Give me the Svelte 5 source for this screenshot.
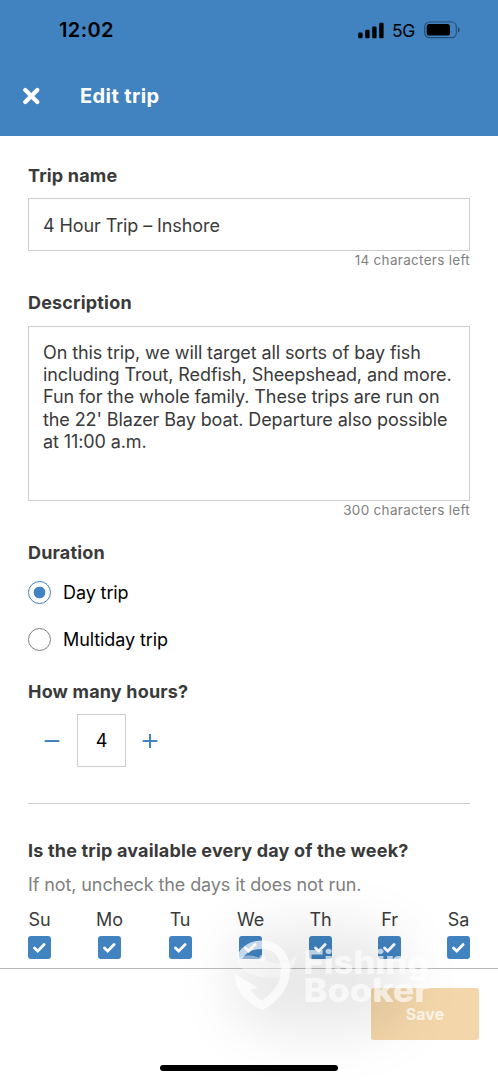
<script lang="ts">
	let tripName = $state('4 Hour Trip – Inshore');
	let description = $state(
		"On this trip, we will target all sorts of bay fish including Trout, Redfish, Sheepshead, and more. Fun for the whole family. These trips are run on the 22' Blazer Bay boat. Departure also possible at 11:00 a.m."
	);
	let duration = $state('day');
	let hours = $state(4);
	let days = $state([
		{ label: 'Su', checked: true },
		{ label: 'Mo', checked: true },
		{ label: 'Tu', checked: true },
		{ label: 'We', checked: true },
		{ label: 'Th', checked: true },
		{ label: 'Fr', checked: true },
		{ label: 'Sa', checked: true }
	]);
</script>

<div class="screen">
	<header>
		<div class="status-bar">
			<span class="time">12:02</span>
			<div class="status-icons">
				<svg class="signal" width="26" height="17" viewBox="0 0 26 17" aria-hidden="true">
					<rect x="0.2" y="10.5" width="4.4" height="5.8" rx="1.2" />
					<rect x="7.2" y="7.8" width="4.4" height="8.5" rx="1.2" />
					<rect x="14.2" y="4.5" width="4.4" height="11.8" rx="1.2" />
					<rect x="21.2" y="0.8" width="4.4" height="15.5" rx="1.2" />
				</svg>
				<span class="network">5G</span>
				<svg class="battery" width="37" height="18" viewBox="0 0 37 18" aria-hidden="true">
					<rect x="0.7" y="1" width="31.6" height="15.6" rx="4.6" fill="none" stroke="#000" stroke-opacity="0.4" stroke-width="1.2" />
					<rect x="2.7" y="3" width="23.3" height="11.6" rx="2.6" />
					<path d="M34 6.2c2.2.8 2.2 4.4 0 5.2z" opacity="0.45" />
				</svg>
			</div>
		</div>
		<div class="title-bar">
			<button class="close" aria-label="Close">
				<svg width="18" height="18" viewBox="0 0 18 18" aria-hidden="true">
					<path d="M3.3 3l12 12M15.3 3l-12 12" stroke="#fff" stroke-width="4.2" stroke-linecap="round" />
				</svg>
			</button>
			<h1>Edit trip</h1>
		</div>
	</header>

	<main>
		<label class="heading" for="trip-name">Trip name</label>
		<input id="trip-name" class="name" type="text" bind:value={tripName} />
		<p class="counter">14 characters left</p>

		<label class="heading description-label" for="description">Description</label>
		<textarea id="description" bind:value={description}></textarea>
		<p class="counter">300 characters left</p>

		<h2 class="heading duration-label">Duration</h2>
		<div class="radios">
			<label class="radio">
				<input type="radio" value="day" bind:group={duration} />
				<span>Day trip</span>
			</label>
			<label class="radio">
				<input type="radio" value="multiday" bind:group={duration} />
				<span>Multiday trip</span>
			</label>
		</div>

		<h2 class="heading hours-label">How many hours?</h2>
		<div class="stepper">
			<button aria-label="Fewer hours" onclick={() => (hours = Math.max(1, hours - 1))}>
				<svg width="16" height="16" viewBox="0 0 16 16"><path d="M.7 8h14.6" /></svg>
			</button>
			<output>{hours}</output>
			<button aria-label="More hours" onclick={() => hours++}>
				<svg width="16" height="16" viewBox="0 0 16 16"><path d="M.7 8h14.6M8 1v14" /></svg>
			</button>
		</div>

		<hr />

		<h2 class="heading week-label">Is the trip available every day of the week?</h2>
		<p class="help">If not, uncheck the days it does not run.</p>
		<div class="days">
			{#each days as day}
				<label class="day">
					<span>{day.label}</span>
					<input type="checkbox" bind:checked={day.checked} />
					<i class="box">
						{#if day.checked}
							<svg width="23" height="23" viewBox="0 0 23 23" aria-hidden="true">
								<path d="M6.5 12l3.2 3.1 6.4-6.6" />
							</svg>
						{/if}
					</i>
				</label>
			{/each}
		</div>
	</main>

	<footer>
		<button class="save">Save</button>
		<div class="home-indicator"></div>
	</footer>

	<div class="watermark">
		<svg width="300" height="190" viewBox="198 890 300 190" fill="#fff">
			<path d="M236 957C242 945 251 940.5 262 940.5C279 941 290 953 290 970C290 987 279 1002 262 1010C246 1003 235 991 235 974L258 988L250.5 989.5C252 994 257 998 262 1000C274 993 281 982 281 970C281 957 274 949 262 949C252 949 246 953 242 959Z" opacity="0.7" />
			<path d="M236 961C242 954 252 954 262 959C274 965 288 966 297 954C295 969 286 978 272 978C255 978 242 972 236 961Z" opacity="0.4" />
			<circle cx="262.5" cy="958" r="3" opacity="0.6" />
			<g opacity="0.65">
				<text x="303.5" y="974" textLength="126" lengthAdjust="spacingAndGlyphs">Fishing</text>
				<text x="303.5" y="1002" textLength="126" lengthAdjust="spacingAndGlyphs">Booker</text>
			</g>
		</svg>
	</div>
</div>

<style>
	:global(body) {
		margin: 0;
	}

	.screen {
		position: relative;
		display: flex;
		flex-direction: column;
		width: 498px;
		height: 1080px;
		overflow: hidden;
		background: #fff;
		color: #3a3a3a;
		font-family: Inter, 'Liberation Sans', sans-serif;
		font-size: 18px;
		letter-spacing: -0.1px;
	}

	button,
	input,
	textarea {
		font: inherit;
		letter-spacing: inherit;
		color: inherit;
	}

	button {
		padding: 0;
		border: none;
		background: none;
		cursor: pointer;
	}

	h1,
	h2,
	p {
		margin: 0;
	}

	header {
		flex: none;
		height: 136px;
		background: #4183c0;
	}

	.status-bar {
		display: flex;
		align-items: center;
		justify-content: space-between;
		height: 60px;
		padding: 0 37px 0 59px;
		color: #000;
	}

	.time {
		font-size: 20px;
		font-weight: 600;
		letter-spacing: 0.4px;
	}

	.status-icons {
		display: flex;
		align-items: center;
	}

	.network {
		margin: 1px 9px 0 8px;
		font-size: 17.5px;
		letter-spacing: -0.3px;
	}

	.title-bar {
		display: flex;
		align-items: center;
		gap: 40px;
		height: 72px;
		padding-left: 22px;
	}

	.close {
		display: flex;
	}

	h1 {
		color: #fff;
		font-size: 20px;
		font-weight: 700;
		letter-spacing: 0.4px;
	}

	main {
		flex: none;
		display: flex;
		flex-direction: column;
		height: 832px;
		box-sizing: border-box;
		padding: 28px 28px 0;
	}

	.heading {
		font-size: 18px;
		font-weight: 700;
		line-height: 24px;
		letter-spacing: 0.18px;
	}

	.name {
		box-sizing: border-box;
		height: 53px;
		margin-top: 10px;
		padding: 2px 14px 0;
		border: 1px solid #ccc;
		outline: none;
	}

	.counter {
		color: #808080;
		font-size: 13.5px;
		line-height: 18px;
		text-align: right;
		letter-spacing: 0.3px;
	}

	.description-label {
		margin-top: 22px;
	}

	textarea {
		box-sizing: border-box;
		height: 175px;
		margin-top: 11px;
		padding: 15px 14px;
		border: 1px solid #ccc;
		line-height: 22.2px;
		outline: none;
		overflow: hidden;
		resize: none;
	}

	.duration-label {
		margin-top: 22px;
	}

	.radios {
		display: flex;
		flex-direction: column;
		gap: 23px;
		margin-top: 15px;
	}

	.radio {
		display: flex;
		align-items: center;
		gap: 12px;
		height: 24px;
		color: #000;
	}

	.radio input {
		appearance: none;
		box-sizing: border-box;
		width: 23px;
		height: 23px;
		margin: 0;
		border: 1px solid #808080;
		border-radius: 50%;
	}

	.radio input:checked {
		border-color: #4183c0;
		background: radial-gradient(circle, #4183c0 5.5px, transparent 6.2px);
	}

	.hours-label {
		margin-top: 29px;
	}

	.stepper {
		display: flex;
		align-items: center;
		margin-top: 10px;
	}

	.stepper button {
		display: flex;
		align-items: center;
		justify-content: center;
		box-sizing: border-box;
		width: 49px;
		height: 48px;
		padding-right: 2px;
	}

	.stepper path {
		stroke: #4183c0;
		stroke-width: 2;
	}

	output {
		box-sizing: border-box;
		width: 49px;
		height: 53px;
		border: 1px solid #ccc;
		color: #000;
		line-height: 52px;
		text-align: center;
	}

	hr {
		width: 100%;
		height: 1px;
		margin: 36px 0 0;
		border: none;
		background: #ccc;
	}

	.week-label {
		margin-top: 35px;
		white-space: nowrap;
	}

	.help {
		margin-top: 10px;
		color: #808080;
		line-height: 24px;
	}

	.days {
		display: grid;
		grid-template-columns: 70px 70.5px 70.5px 70px 69px 69px 23px;
		margin-top: 12px;
	}

	.day {
		display: flex;
		flex-direction: column;
		align-items: center;
		width: 23px;
		line-height: 22px;
	}

	.day input {
		position: absolute;
		opacity: 0;
	}

	.box {
		display: block;
		width: 23px;
		height: 23px;
		margin-top: 5px;
		border-radius: 3px;
		background: #4183c0;
	}

	.box svg {
		display: block;
	}

	.box path {
		fill: none;
		stroke: #fff;
		stroke-width: 2.8;
		stroke-linecap: round;
	}

	footer {
		flex: 1;
		display: flex;
		flex-direction: column;
		border-top: 1px solid #bbb;
	}

	.save {
		align-self: flex-end;
		width: 108px;
		height: 52px;
		margin: 19px 19px 0 0;
		border-radius: 3px;
		background: #f3d6a9;
		color: #fcf5ea;
		font-size: 16px;
		font-weight: 700;
		letter-spacing: 0.1px;
	}

	.home-indicator {
		align-self: center;
		width: 178px;
		height: 6px;
		margin-top: 25px;
		border-radius: 3px;
		background: #000;
	}

	.watermark {
		position: absolute;
		right: 0;
		bottom: 0;
		display: flex;
		pointer-events: none;
	}

	.watermark::before {
		content: '';
		position: absolute;
		inset: 38px 90px 48px 32px;
		border-radius: 50px;
		background: rgba(0, 0, 0, 0.085);
		filter: blur(26px);
	}

	.watermark svg {
		position: relative;
	}

	.watermark text {
		font-size: 32px;
		font-weight: 800;
		letter-spacing: 0;
	}
</style>
